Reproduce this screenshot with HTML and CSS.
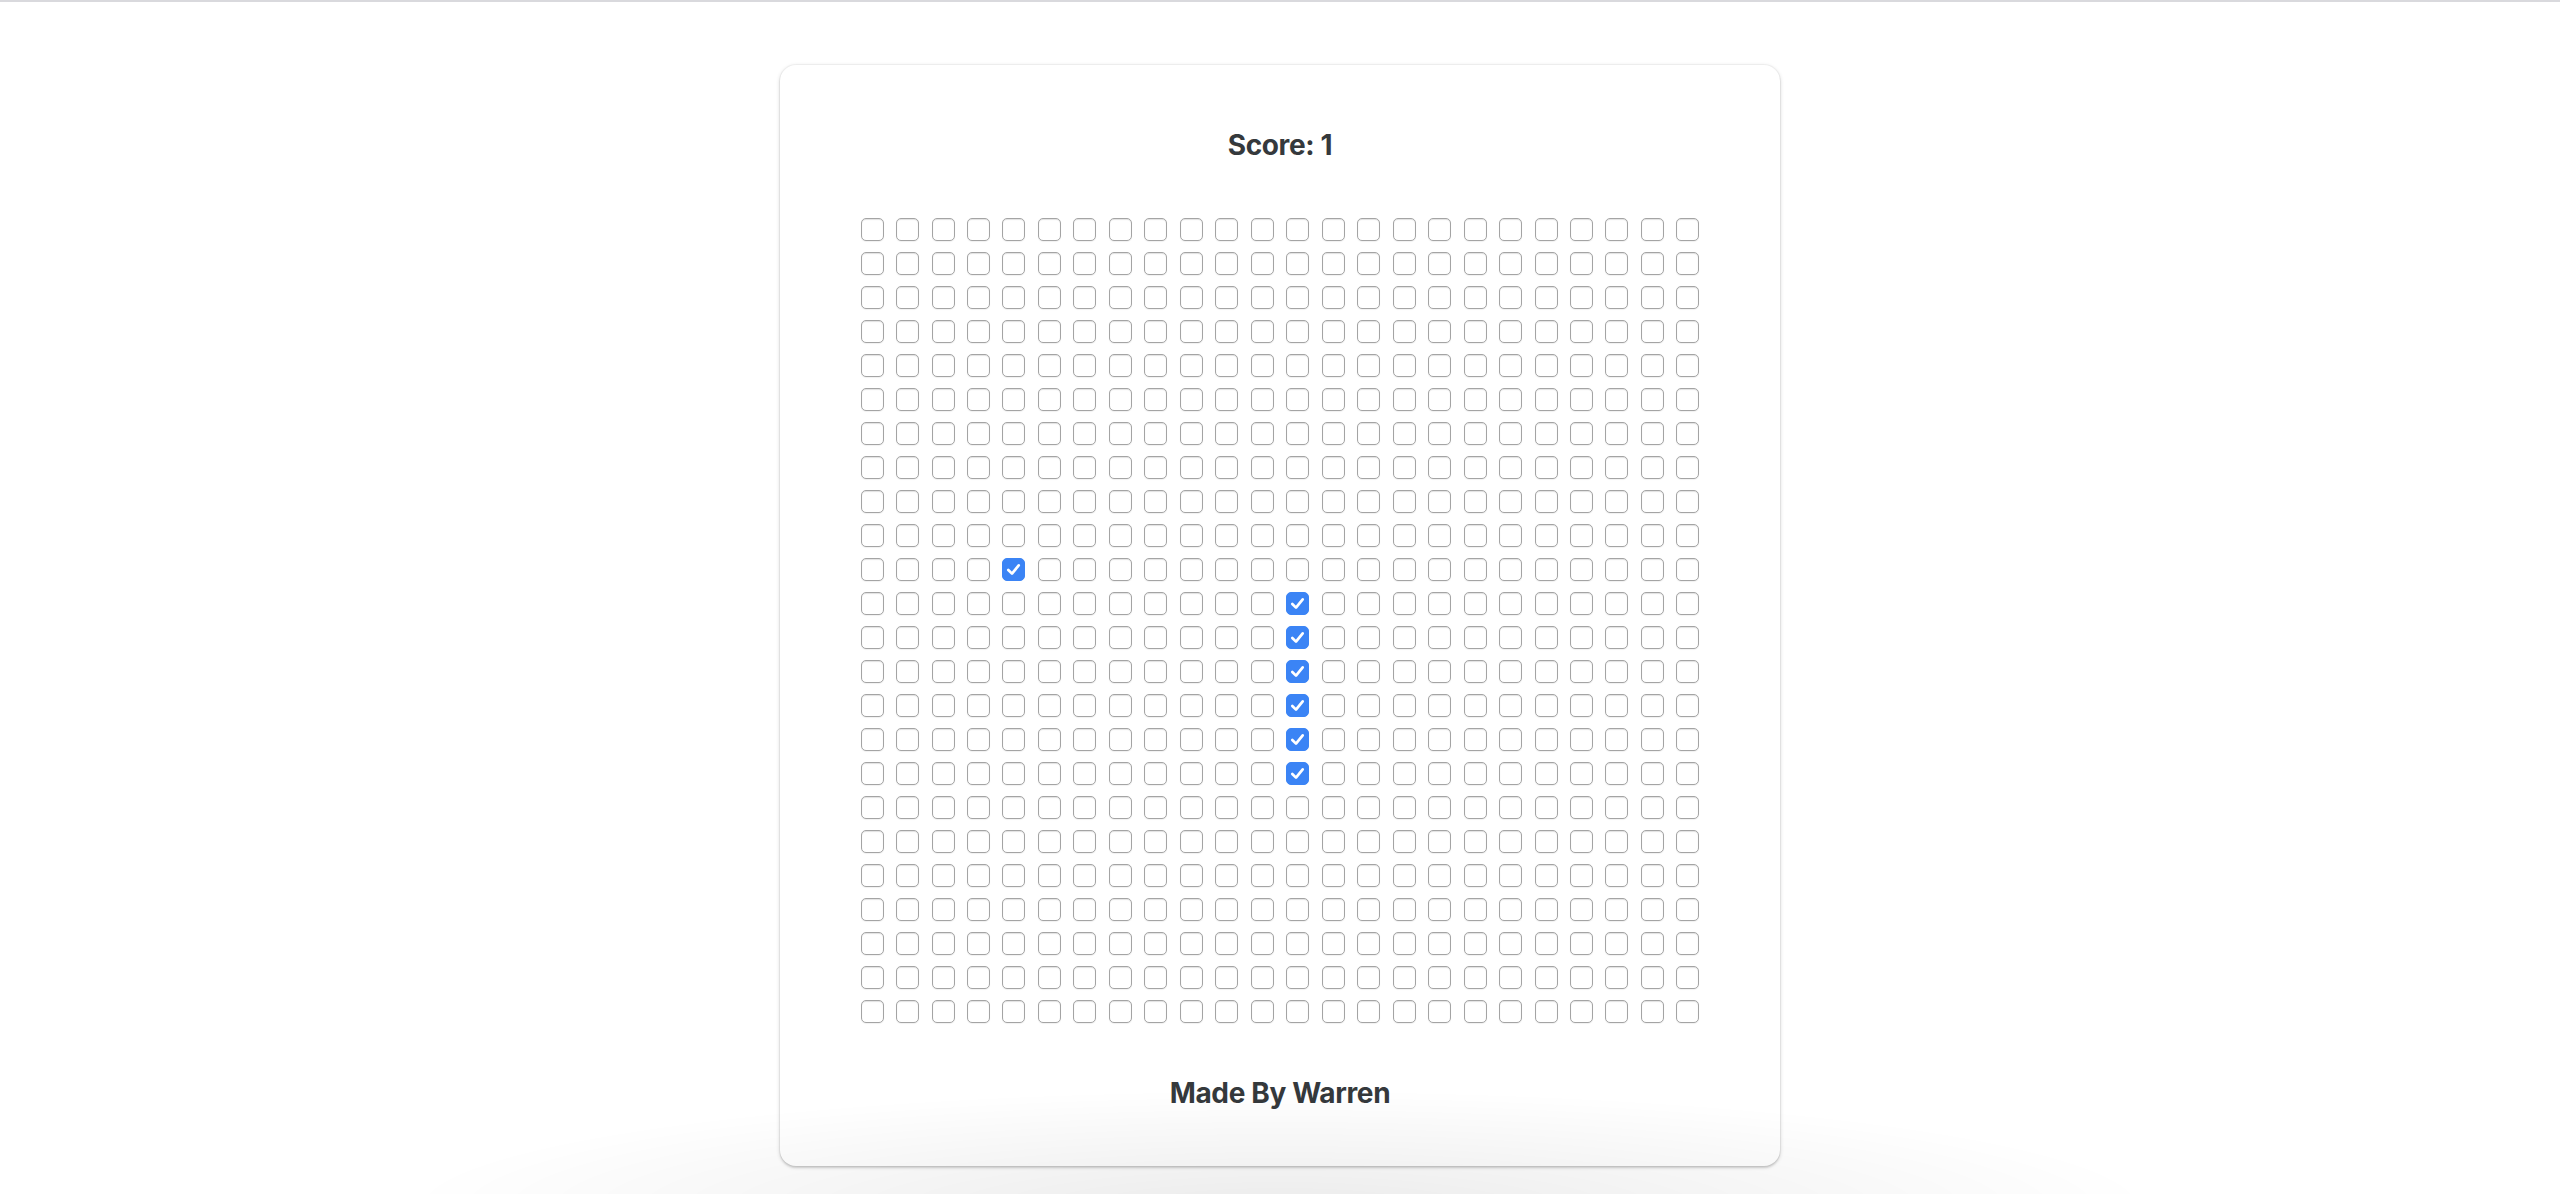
FILE: index.html
```html
<!DOCTYPE html>
<html lang="en">
<head>
<meta charset="utf-8">
<title>Checkbox Snake</title>
<link rel="stylesheet" href="styles.css">
</head>
<body>
<div class="topline"></div>
<main class="page">
  <section class="card">
    <h2 class="score">Score: 1</h2>
    <div class="board">
<span class="box"></span><span class="box"></span><span class="box"></span><span class="box"></span><span class="box"></span><span class="box"></span><span class="box"></span><span class="box"></span><span class="box"></span><span class="box"></span><span class="box"></span><span class="box"></span><span class="box"></span><span class="box"></span><span class="box"></span><span class="box"></span><span class="box"></span><span class="box"></span><span class="box"></span><span class="box"></span><span class="box"></span><span class="box"></span><span class="box"></span><span class="box"></span>
<span class="box"></span><span class="box"></span><span class="box"></span><span class="box"></span><span class="box"></span><span class="box"></span><span class="box"></span><span class="box"></span><span class="box"></span><span class="box"></span><span class="box"></span><span class="box"></span><span class="box"></span><span class="box"></span><span class="box"></span><span class="box"></span><span class="box"></span><span class="box"></span><span class="box"></span><span class="box"></span><span class="box"></span><span class="box"></span><span class="box"></span><span class="box"></span>
<span class="box"></span><span class="box"></span><span class="box"></span><span class="box"></span><span class="box"></span><span class="box"></span><span class="box"></span><span class="box"></span><span class="box"></span><span class="box"></span><span class="box"></span><span class="box"></span><span class="box"></span><span class="box"></span><span class="box"></span><span class="box"></span><span class="box"></span><span class="box"></span><span class="box"></span><span class="box"></span><span class="box"></span><span class="box"></span><span class="box"></span><span class="box"></span>
<span class="box"></span><span class="box"></span><span class="box"></span><span class="box"></span><span class="box"></span><span class="box"></span><span class="box"></span><span class="box"></span><span class="box"></span><span class="box"></span><span class="box"></span><span class="box"></span><span class="box"></span><span class="box"></span><span class="box"></span><span class="box"></span><span class="box"></span><span class="box"></span><span class="box"></span><span class="box"></span><span class="box"></span><span class="box"></span><span class="box"></span><span class="box"></span>
<span class="box"></span><span class="box"></span><span class="box"></span><span class="box"></span><span class="box"></span><span class="box"></span><span class="box"></span><span class="box"></span><span class="box"></span><span class="box"></span><span class="box"></span><span class="box"></span><span class="box"></span><span class="box"></span><span class="box"></span><span class="box"></span><span class="box"></span><span class="box"></span><span class="box"></span><span class="box"></span><span class="box"></span><span class="box"></span><span class="box"></span><span class="box"></span>
<span class="box"></span><span class="box"></span><span class="box"></span><span class="box"></span><span class="box"></span><span class="box"></span><span class="box"></span><span class="box"></span><span class="box"></span><span class="box"></span><span class="box"></span><span class="box"></span><span class="box"></span><span class="box"></span><span class="box"></span><span class="box"></span><span class="box"></span><span class="box"></span><span class="box"></span><span class="box"></span><span class="box"></span><span class="box"></span><span class="box"></span><span class="box"></span>
<span class="box"></span><span class="box"></span><span class="box"></span><span class="box"></span><span class="box"></span><span class="box"></span><span class="box"></span><span class="box"></span><span class="box"></span><span class="box"></span><span class="box"></span><span class="box"></span><span class="box"></span><span class="box"></span><span class="box"></span><span class="box"></span><span class="box"></span><span class="box"></span><span class="box"></span><span class="box"></span><span class="box"></span><span class="box"></span><span class="box"></span><span class="box"></span>
<span class="box"></span><span class="box"></span><span class="box"></span><span class="box"></span><span class="box"></span><span class="box"></span><span class="box"></span><span class="box"></span><span class="box"></span><span class="box"></span><span class="box"></span><span class="box"></span><span class="box"></span><span class="box"></span><span class="box"></span><span class="box"></span><span class="box"></span><span class="box"></span><span class="box"></span><span class="box"></span><span class="box"></span><span class="box"></span><span class="box"></span><span class="box"></span>
<span class="box"></span><span class="box"></span><span class="box"></span><span class="box"></span><span class="box"></span><span class="box"></span><span class="box"></span><span class="box"></span><span class="box"></span><span class="box"></span><span class="box"></span><span class="box"></span><span class="box"></span><span class="box"></span><span class="box"></span><span class="box"></span><span class="box"></span><span class="box"></span><span class="box"></span><span class="box"></span><span class="box"></span><span class="box"></span><span class="box"></span><span class="box"></span>
<span class="box"></span><span class="box"></span><span class="box"></span><span class="box"></span><span class="box"></span><span class="box"></span><span class="box"></span><span class="box"></span><span class="box"></span><span class="box"></span><span class="box"></span><span class="box"></span><span class="box"></span><span class="box"></span><span class="box"></span><span class="box"></span><span class="box"></span><span class="box"></span><span class="box"></span><span class="box"></span><span class="box"></span><span class="box"></span><span class="box"></span><span class="box"></span>
<span class="box"></span><span class="box"></span><span class="box"></span><span class="box"></span><span class="box on"><svg viewBox="0 0 23 23"><path d="M6.3 12 L10 15.6 L16.7 7.4"/></svg></span><span class="box"></span><span class="box"></span><span class="box"></span><span class="box"></span><span class="box"></span><span class="box"></span><span class="box"></span><span class="box"></span><span class="box"></span><span class="box"></span><span class="box"></span><span class="box"></span><span class="box"></span><span class="box"></span><span class="box"></span><span class="box"></span><span class="box"></span><span class="box"></span><span class="box"></span>
<span class="box"></span><span class="box"></span><span class="box"></span><span class="box"></span><span class="box"></span><span class="box"></span><span class="box"></span><span class="box"></span><span class="box"></span><span class="box"></span><span class="box"></span><span class="box"></span><span class="box on"><svg viewBox="0 0 23 23"><path d="M6.3 12 L10 15.6 L16.7 7.4"/></svg></span><span class="box"></span><span class="box"></span><span class="box"></span><span class="box"></span><span class="box"></span><span class="box"></span><span class="box"></span><span class="box"></span><span class="box"></span><span class="box"></span><span class="box"></span>
<span class="box"></span><span class="box"></span><span class="box"></span><span class="box"></span><span class="box"></span><span class="box"></span><span class="box"></span><span class="box"></span><span class="box"></span><span class="box"></span><span class="box"></span><span class="box"></span><span class="box on"><svg viewBox="0 0 23 23"><path d="M6.3 12 L10 15.6 L16.7 7.4"/></svg></span><span class="box"></span><span class="box"></span><span class="box"></span><span class="box"></span><span class="box"></span><span class="box"></span><span class="box"></span><span class="box"></span><span class="box"></span><span class="box"></span><span class="box"></span>
<span class="box"></span><span class="box"></span><span class="box"></span><span class="box"></span><span class="box"></span><span class="box"></span><span class="box"></span><span class="box"></span><span class="box"></span><span class="box"></span><span class="box"></span><span class="box"></span><span class="box on"><svg viewBox="0 0 23 23"><path d="M6.3 12 L10 15.6 L16.7 7.4"/></svg></span><span class="box"></span><span class="box"></span><span class="box"></span><span class="box"></span><span class="box"></span><span class="box"></span><span class="box"></span><span class="box"></span><span class="box"></span><span class="box"></span><span class="box"></span>
<span class="box"></span><span class="box"></span><span class="box"></span><span class="box"></span><span class="box"></span><span class="box"></span><span class="box"></span><span class="box"></span><span class="box"></span><span class="box"></span><span class="box"></span><span class="box"></span><span class="box on"><svg viewBox="0 0 23 23"><path d="M6.3 12 L10 15.6 L16.7 7.4"/></svg></span><span class="box"></span><span class="box"></span><span class="box"></span><span class="box"></span><span class="box"></span><span class="box"></span><span class="box"></span><span class="box"></span><span class="box"></span><span class="box"></span><span class="box"></span>
<span class="box"></span><span class="box"></span><span class="box"></span><span class="box"></span><span class="box"></span><span class="box"></span><span class="box"></span><span class="box"></span><span class="box"></span><span class="box"></span><span class="box"></span><span class="box"></span><span class="box on"><svg viewBox="0 0 23 23"><path d="M6.3 12 L10 15.6 L16.7 7.4"/></svg></span><span class="box"></span><span class="box"></span><span class="box"></span><span class="box"></span><span class="box"></span><span class="box"></span><span class="box"></span><span class="box"></span><span class="box"></span><span class="box"></span><span class="box"></span>
<span class="box"></span><span class="box"></span><span class="box"></span><span class="box"></span><span class="box"></span><span class="box"></span><span class="box"></span><span class="box"></span><span class="box"></span><span class="box"></span><span class="box"></span><span class="box"></span><span class="box on"><svg viewBox="0 0 23 23"><path d="M6.3 12 L10 15.6 L16.7 7.4"/></svg></span><span class="box"></span><span class="box"></span><span class="box"></span><span class="box"></span><span class="box"></span><span class="box"></span><span class="box"></span><span class="box"></span><span class="box"></span><span class="box"></span><span class="box"></span>
<span class="box"></span><span class="box"></span><span class="box"></span><span class="box"></span><span class="box"></span><span class="box"></span><span class="box"></span><span class="box"></span><span class="box"></span><span class="box"></span><span class="box"></span><span class="box"></span><span class="box"></span><span class="box"></span><span class="box"></span><span class="box"></span><span class="box"></span><span class="box"></span><span class="box"></span><span class="box"></span><span class="box"></span><span class="box"></span><span class="box"></span><span class="box"></span>
<span class="box"></span><span class="box"></span><span class="box"></span><span class="box"></span><span class="box"></span><span class="box"></span><span class="box"></span><span class="box"></span><span class="box"></span><span class="box"></span><span class="box"></span><span class="box"></span><span class="box"></span><span class="box"></span><span class="box"></span><span class="box"></span><span class="box"></span><span class="box"></span><span class="box"></span><span class="box"></span><span class="box"></span><span class="box"></span><span class="box"></span><span class="box"></span>
<span class="box"></span><span class="box"></span><span class="box"></span><span class="box"></span><span class="box"></span><span class="box"></span><span class="box"></span><span class="box"></span><span class="box"></span><span class="box"></span><span class="box"></span><span class="box"></span><span class="box"></span><span class="box"></span><span class="box"></span><span class="box"></span><span class="box"></span><span class="box"></span><span class="box"></span><span class="box"></span><span class="box"></span><span class="box"></span><span class="box"></span><span class="box"></span>
<span class="box"></span><span class="box"></span><span class="box"></span><span class="box"></span><span class="box"></span><span class="box"></span><span class="box"></span><span class="box"></span><span class="box"></span><span class="box"></span><span class="box"></span><span class="box"></span><span class="box"></span><span class="box"></span><span class="box"></span><span class="box"></span><span class="box"></span><span class="box"></span><span class="box"></span><span class="box"></span><span class="box"></span><span class="box"></span><span class="box"></span><span class="box"></span>
<span class="box"></span><span class="box"></span><span class="box"></span><span class="box"></span><span class="box"></span><span class="box"></span><span class="box"></span><span class="box"></span><span class="box"></span><span class="box"></span><span class="box"></span><span class="box"></span><span class="box"></span><span class="box"></span><span class="box"></span><span class="box"></span><span class="box"></span><span class="box"></span><span class="box"></span><span class="box"></span><span class="box"></span><span class="box"></span><span class="box"></span><span class="box"></span>
<span class="box"></span><span class="box"></span><span class="box"></span><span class="box"></span><span class="box"></span><span class="box"></span><span class="box"></span><span class="box"></span><span class="box"></span><span class="box"></span><span class="box"></span><span class="box"></span><span class="box"></span><span class="box"></span><span class="box"></span><span class="box"></span><span class="box"></span><span class="box"></span><span class="box"></span><span class="box"></span><span class="box"></span><span class="box"></span><span class="box"></span><span class="box"></span>
<span class="box"></span><span class="box"></span><span class="box"></span><span class="box"></span><span class="box"></span><span class="box"></span><span class="box"></span><span class="box"></span><span class="box"></span><span class="box"></span><span class="box"></span><span class="box"></span><span class="box"></span><span class="box"></span><span class="box"></span><span class="box"></span><span class="box"></span><span class="box"></span><span class="box"></span><span class="box"></span><span class="box"></span><span class="box"></span><span class="box"></span><span class="box"></span>
    </div>
    <h2 class="credit">Made By Warren</h2>
  </section>
</main>
<div class="floor-shadow"></div>
</body>
</html>
```

FILE: styles.css
```css
html, body {
  margin: 0;
  padding: 0;
  background: #ffffff;
}

body {
  font-family: Inter, "Noto Sans", "Liberation Sans", sans-serif;
  color: #35393c;
  height: 1194px;
  overflow: hidden;
}

.topline {
  height: 2px;
  background: #d9d9dd;
}

.page {
  display: flex;
  justify-content: center;
  padding-top: 63px;
}

.card {
  width: 1000px;
  height: 1101px;
  box-sizing: border-box;
  background: #ffffff;
  border-radius: 16px;
  box-shadow: 0 0 0 1px rgba(0, 0, 0, 0.03), 0 1px 4px rgba(0, 0, 0, 0.16), 0 2px 2px rgba(0, 0, 0, 0.1);
  display: flex;
  flex-direction: column;
  align-items: center;
  padding-top: 63px;
}

.score,
.credit {
  margin: 0;
  font-size: 28px;
  line-height: 34px;
  font-weight: 700;
  letter-spacing: -0.35px;
  color: #35393c;
}

.board {
  margin-top: 56px;
  display: grid;
  grid-template-columns: repeat(24, 23px);
  grid-auto-rows: 23px;
  column-gap: 12.48px;
  row-gap: 11px;
}

.credit {
  margin-top: 53px;
}

.box {
  display: block;
  width: 23px;
  height: 23px;
  box-sizing: border-box;
  border: 1px solid #a4a4a4;
  border-radius: 5px;
  background: #ffffff;
  box-shadow: inset 0 1px 1px rgba(0, 0, 0, 0.12), 0 1px 1px rgba(0, 0, 0, 0.06);
}

.box.on {
  border-color: #3b84f5;
  background: #3b84f5;
  box-shadow: none;
}

.box svg {
  display: block;
  width: 23px;
  height: 23px;
  margin: -1px;
}

.box svg path {
  fill: none;
  stroke: #ffffff;
  stroke-width: 2.7;
  stroke-linecap: round;
  stroke-linejoin: round;
}

.floor-shadow {
  position: fixed;
  left: 0;
  right: 0;
  bottom: 0;
  height: 110px;
  pointer-events: none;
  background: radial-gradient(ellipse 880px 120px at 1280px 125px, rgba(0, 0, 0, 0.08), rgba(0, 0, 0, 0.03) 60%, rgba(0, 0, 0, 0) 100%);
}
```
